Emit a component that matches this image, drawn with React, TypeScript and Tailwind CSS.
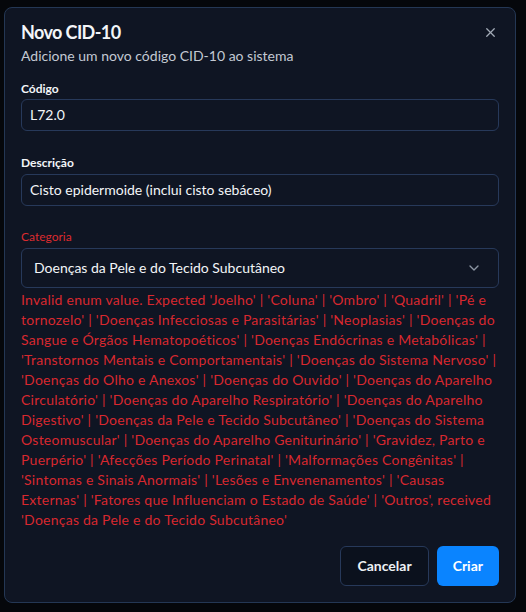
import { X, ChevronDown } from 'lucide-react';

const errorText =
  "Invalid enum value. Expected 'Joelho' | 'Coluna' | 'Ombro' | 'Quadril' | 'Pé e tornozelo' | 'Doenças Infecciosas e Parasitárias' | 'Neoplasias' | 'Doenças do Sangue e Órgãos Hematopoéticos' | 'Doenças Endócrinas e Metabólicas' | 'Transtornos Mentais e Comportamentais' | 'Doenças do Sistema Nervoso' | 'Doenças do Olho e Anexos' | 'Doenças do Ouvido' | 'Doenças do Aparelho Circulatório' | 'Doenças do Aparelho Respiratório' | 'Doenças do Aparelho Digestivo' | 'Doenças da Pele e Tecido Subcutâneo' | 'Doenças do Sistema Osteomuscular' | 'Doenças do Aparelho Geniturinário' | 'Gravidez, Parto e Puerpério' | 'Afecções Período Perinatal' | 'Malformações Congênitas' | 'Sintomas e Sinais Anormais' | 'Lesões e Envenenamentos' | 'Causas Externas' | 'Fatores que Influenciam o Estado de Saúde' | 'Outros', received 'Doenças da Pele e do Tecido Subcutâneo'";

export default function App() {
    return (
        <div className="w-[526px] h-[612px] bg-[#05070b] pt-[7px] pl-[4px] font-['Lato',sans-serif] overflow-hidden">
            <div className="w-[512px] h-[596px] rounded-lg border border-[#243754] bg-[#0f1523] px-4 pt-[12px] pb-4 flex flex-col">

                <div className="flex items-start justify-between">
                    <div className="flex flex-col">
                        <h2 className="text-lg font-bold tracking-[-0.6px] text-[#f3f5f8] leading-6">Novo CID-10</h2>
                        <p className="text-sm text-[#c3c9d3] leading-5 mt-[2px]">Adicione um novo código CID-10 ao sistema</p>
                    </div>
                    <button className="mt-[5px] mr-[1px] text-[#a3abb7]">
                        <X size={15} strokeWidth={2} />
                    </button>
                </div>

                <div className="flex flex-col mt-[15px]">
                    <label className="text-xs font-bold text-[#f3f5f8] leading-4">Código</label>
                    <div className="mt-[2px] h-[32px] rounded-md border border-[#27395a] px-2 flex items-center text-sm text-[#f3f5f8]">
                        L72.0
                    </div>
                </div>

                <div className="flex flex-col mt-[24px]">
                    <label className="text-xs font-bold text-[#f3f5f8] leading-4">Descrição</label>
                    <div className="mt-[3px] h-[32px] rounded-md border border-[#27395a] px-2 flex items-center text-sm text-[#f3f5f8]">
                        Cisto epidermoide (inclui cisto sebáceo)
                    </div>
                </div>

                <div className="flex flex-col mt-[23px]">
                    <label className="text-xs text-[#dc2b2f] leading-4">Categoria</label>
                    <div className="mt-[3px] h-[40px] rounded-md border border-[#27395a] pl-3 pr-4 flex items-center justify-between text-sm text-[#f3f5f8]">
                        <span>Doenças da Pele e do Tecido Subcutâneo</span>
                        <ChevronDown size={16} className="text-[#8d96a3]" />
                    </div>
                    <p className="mt-[2px] text-sm leading-5 tracking-[0.24px] text-[#d8282f]">{errorText}</p>
                </div>

                <div className="flex justify-end gap-2 mt-auto">
                    <button className="h-10 px-4 rounded-md border border-[#27395a] bg-[#0b111d] text-sm font-bold text-[#eef1f5]">
                        Cancelar
                    </button>
                    <button className="h-10 px-4 rounded-md bg-[#0a84ff] text-sm font-bold text-white">
                        Criar
                    </button>
                </div>
            </div>
        </div>
    );
}
